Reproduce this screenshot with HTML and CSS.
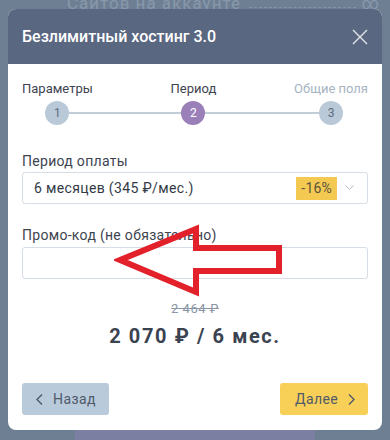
FILE: index.html
```html
<!DOCTYPE html>
<html lang="ru">
<head>
    <meta charset="UTF-8">
    <meta name="viewport" content="width=device-width, initial-scale=1.0">
    <title>Безлимитный хостинг 3.0</title>
    <link rel="stylesheet" href="styles.css">
</head>
<body>

<!-- Page behind the dialog -->
<div class="page">
    <div class="feature-row">
        <svg class="feature-icon" width="38" height="20" viewBox="0 0 38 20">
            <rect x="1" y="-4" width="36" height="12" fill="none" stroke="#8a9aad" stroke-width="1.2"/>
            <line x1="12" y1="-4" x2="12" y2="8" stroke="#8a9aad" stroke-width="1"/>
            <circle cx="5" cy="3" r="0.8" fill="#8a9aad"/>
            <circle cx="8" cy="3" r="0.8" fill="#8a9aad"/>
        </svg>
        <span class="feature-name">Сайтов на аккаунте</span>
        <span class="feature-dots"></span>
        <span class="feature-value">∞</span>
    </div>
    <div class="page-button"></div>
</div>

<!-- Order dialog -->
<div class="modal">
    <div class="modal-header">
        <h2 class="modal-title">Безлимитный хостинг 3.0</h2>
        <button class="close-btn" aria-label="Закрыть">
            <svg width="16" height="16" viewBox="0 0 16 16">
                <path d="M1 1 L15 15 M15 1 L1 15" stroke="#e3e7ec" stroke-width="1.4" fill="none"/>
            </svg>
        </button>
    </div>

    <div class="modal-body">
        <div class="stepper">
            <div class="step done">
                <span class="step-label">Параметры</span>
                <span class="step-num">1</span>
            </div>
            <div class="step active">
                <span class="step-label">Период</span>
                <span class="step-num">2</span>
            </div>
            <div class="step todo">
                <span class="step-label">Общие поля</span>
                <span class="step-num">3</span>
            </div>
        </div>

        <label class="field-label">Период оплаты</label>
        <div class="select-box">
            <span class="select-text">6 месяцев (345 ₽/мес.)</span>
            <span class="discount">-16%</span>
            <svg class="select-arrow" width="9" height="6" viewBox="0 0 9 6">
                <path d="M0.5 0.5 L4.5 4.5 L8.5 0.5" stroke="#b4bcc8" stroke-width="1" fill="none"/>
            </svg>
        </div>

        <label class="field-label promo-label">Промо-код (не обязательно)</label>
        <div class="promo-wrap">
            <input class="text-input" type="text">
            <!-- red pointer drawn over the form -->
            <svg class="pointer" width="180" height="80" viewBox="0 0 180 80">
                <polygon points="6,38 82,7 82,26 165,26 165,49 82,49 82,70" fill="none" stroke="#e3212b" stroke-width="6" stroke-linejoin="miter"/>
            </svg>
        </div>

        <div class="price">
            <div class="price-old">2 464 ₽</div>
            <div class="price-new">2 070 ₽ / 6 мес.</div>
        </div>

        <div class="modal-footer">
            <button class="btn btn-back">
                <svg width="7" height="11" viewBox="0 0 7 11"><path d="M6 0.5 L1 5.5 L6 10.5" stroke="#4f5a6b" stroke-width="1.4" fill="none"/></svg>
                Назад
            </button>
            <button class="btn btn-next">
                Далее
                <svg width="7" height="11" viewBox="0 0 7 11"><path d="M1 0.5 L6 5.5 L1 10.5" stroke="#4f5a6b" stroke-width="1.4" fill="none"/></svg>
            </button>
        </div>
    </div>
</div>

</body>
</html>
```

FILE: styles.css
```css
body {
    margin: 0;
    width: 390px;
    height: 440px;
    overflow: hidden;
    background-color: #6e7f93;
    font-family: Roboto, "Liberation Sans", sans-serif;
    position: relative;
}

/* Page behind the overlay */
.page {
    height: 440px;
    display: flex;
    flex-direction: column;
    justify-content: space-between;
}

.feature-row {
    display: flex;
    align-items: flex-end;
    height: 9px;
    overflow: hidden;
    padding: 0 10px 0 15px;
    color: #8898ab;
    font-size: 17px;
    letter-spacing: 1px;
}

.feature-row > * {
    flex-shrink: 0;
}

.feature-icon {
    margin-bottom: 1px;
}

.feature-name {
    margin-left: 14px;
    line-height: 13px;
    position: relative;
    top: 1px;
}

.feature-dots {
    flex: 1;
    flex-shrink: 1;
    border-bottom: 1px dashed #8494a8;
    margin: 0 6px 1px 8px;
}

.feature-value {
    line-height: 13px;
    position: relative;
    top: 1px;
}

.page-button {
    margin-left: 75px;
    width: 240px;
    height: 10px;
    background-color: #7b80a3;
}

/* Modal */
.modal {
    position: absolute;
    top: 9px;
    left: 8px;
    width: 374px;
    border-radius: 8px;
    overflow: hidden;
    background-color: #ffffff;
}

.modal-header {
    height: 55px;
    background-color: #5a6781;
    display: flex;
    align-items: center;
    justify-content: space-between;
    padding: 0 14px;
}

.modal-title {
    margin: 0;
    color: #ffffff;
    font-size: 16px;
    font-weight: 500;
    letter-spacing: 0;
}

.close-btn {
    background: none;
    border: none;
    padding: 0;
    display: flex;
    cursor: pointer;
}

.modal-body {
    padding: 16px 14px 15px;
}

/* Stepper */
.stepper {
    position: relative;
    display: flex;
    justify-content: space-between;
}

.stepper::before {
    content: "";
    position: absolute;
    left: 35px;
    right: 35px;
    top: 32px;
    height: 2px;
    background-color: #c1cdd9;
}

.step {
    display: flex;
    flex-direction: column;
    align-items: center;
    gap: 3px;
}

.step-label {
    font-size: 13px;
    line-height: 18px;
    color: #3e4450;
}

.step.todo .step-label {
    color: #a7b4c2;
}

.step-num {
    position: relative;
    width: 24px;
    height: 24px;
    border-radius: 50%;
    background-color: #b9c9d8;
    color: #5e6b80;
    font-size: 12px;
    display: flex;
    align-items: center;
    justify-content: center;
}

.step.active .step-num {
    background-color: #9b7fb9;
    color: #ffffff;
}

/* Fields */
.field-label {
    display: block;
    margin-top: 27px;
    font-size: 14px;
    line-height: 18px;
    letter-spacing: 0.3px;
    color: #3e4450;
}

.promo-label {
    margin-top: 22px;
}

.select-box {
    margin-top: 2px;
    height: 30px;
    border: 1px solid #d6dde5;
    border-radius: 3px;
    display: flex;
    align-items: center;
    padding: 0 13px 0 11px;
}

.select-text {
    flex: 1;
    font-size: 14px;
    letter-spacing: 0.35px;
    color: #333a46;
}

.discount {
    background-color: #f4c951;
    color: #5b5342;
    font-size: 14px;
    letter-spacing: 0.2px;
    padding: 3px 5px;
    line-height: 17px;
}

.select-arrow {
    margin-left: 8px;
}

.promo-wrap {
    position: relative;
    margin-top: 3px;
}

.text-input {
    display: block;
    box-sizing: border-box;
    width: 100%;
    height: 32px;
    border: 1px solid #d6dde5;
    border-radius: 3px;
    outline: none;
}

.pointer {
    position: absolute;
    left: 92px;
    top: -25px;
}

/* Price */
.price {
    margin-top: 22px;
    text-align: center;
}

.price-old {
    font-size: 13px;
    line-height: 16px;
    letter-spacing: 0.5px;
    color: #8a95a5;
    text-decoration: line-through;
}

.price-new {
    margin-top: 7px;
    font-size: 20px;
    line-height: 24px;
    font-weight: 700;
    letter-spacing: 1.6px;
    color: #3b4250;
}

/* Footer buttons */
.modal-footer {
    margin-top: 35px;
    display: flex;
    justify-content: space-between;
}

.btn {
    height: 32px;
    border: none;
    border-radius: 3px;
    display: flex;
    align-items: center;
    gap: 10px;
    font-family: Roboto, "Liberation Sans", sans-serif;
    font-size: 14px;
    letter-spacing: 0.4px;
    color: #4f5a6b;
    cursor: pointer;
}

.btn-back {
    width: 87px;
    padding: 0 0 0 14px;
    background-color: #b9cadb;
}

.btn-next {
    width: 88px;
    padding: 0 0 0 15px;
    background-color: #f8cf57;
}
```
